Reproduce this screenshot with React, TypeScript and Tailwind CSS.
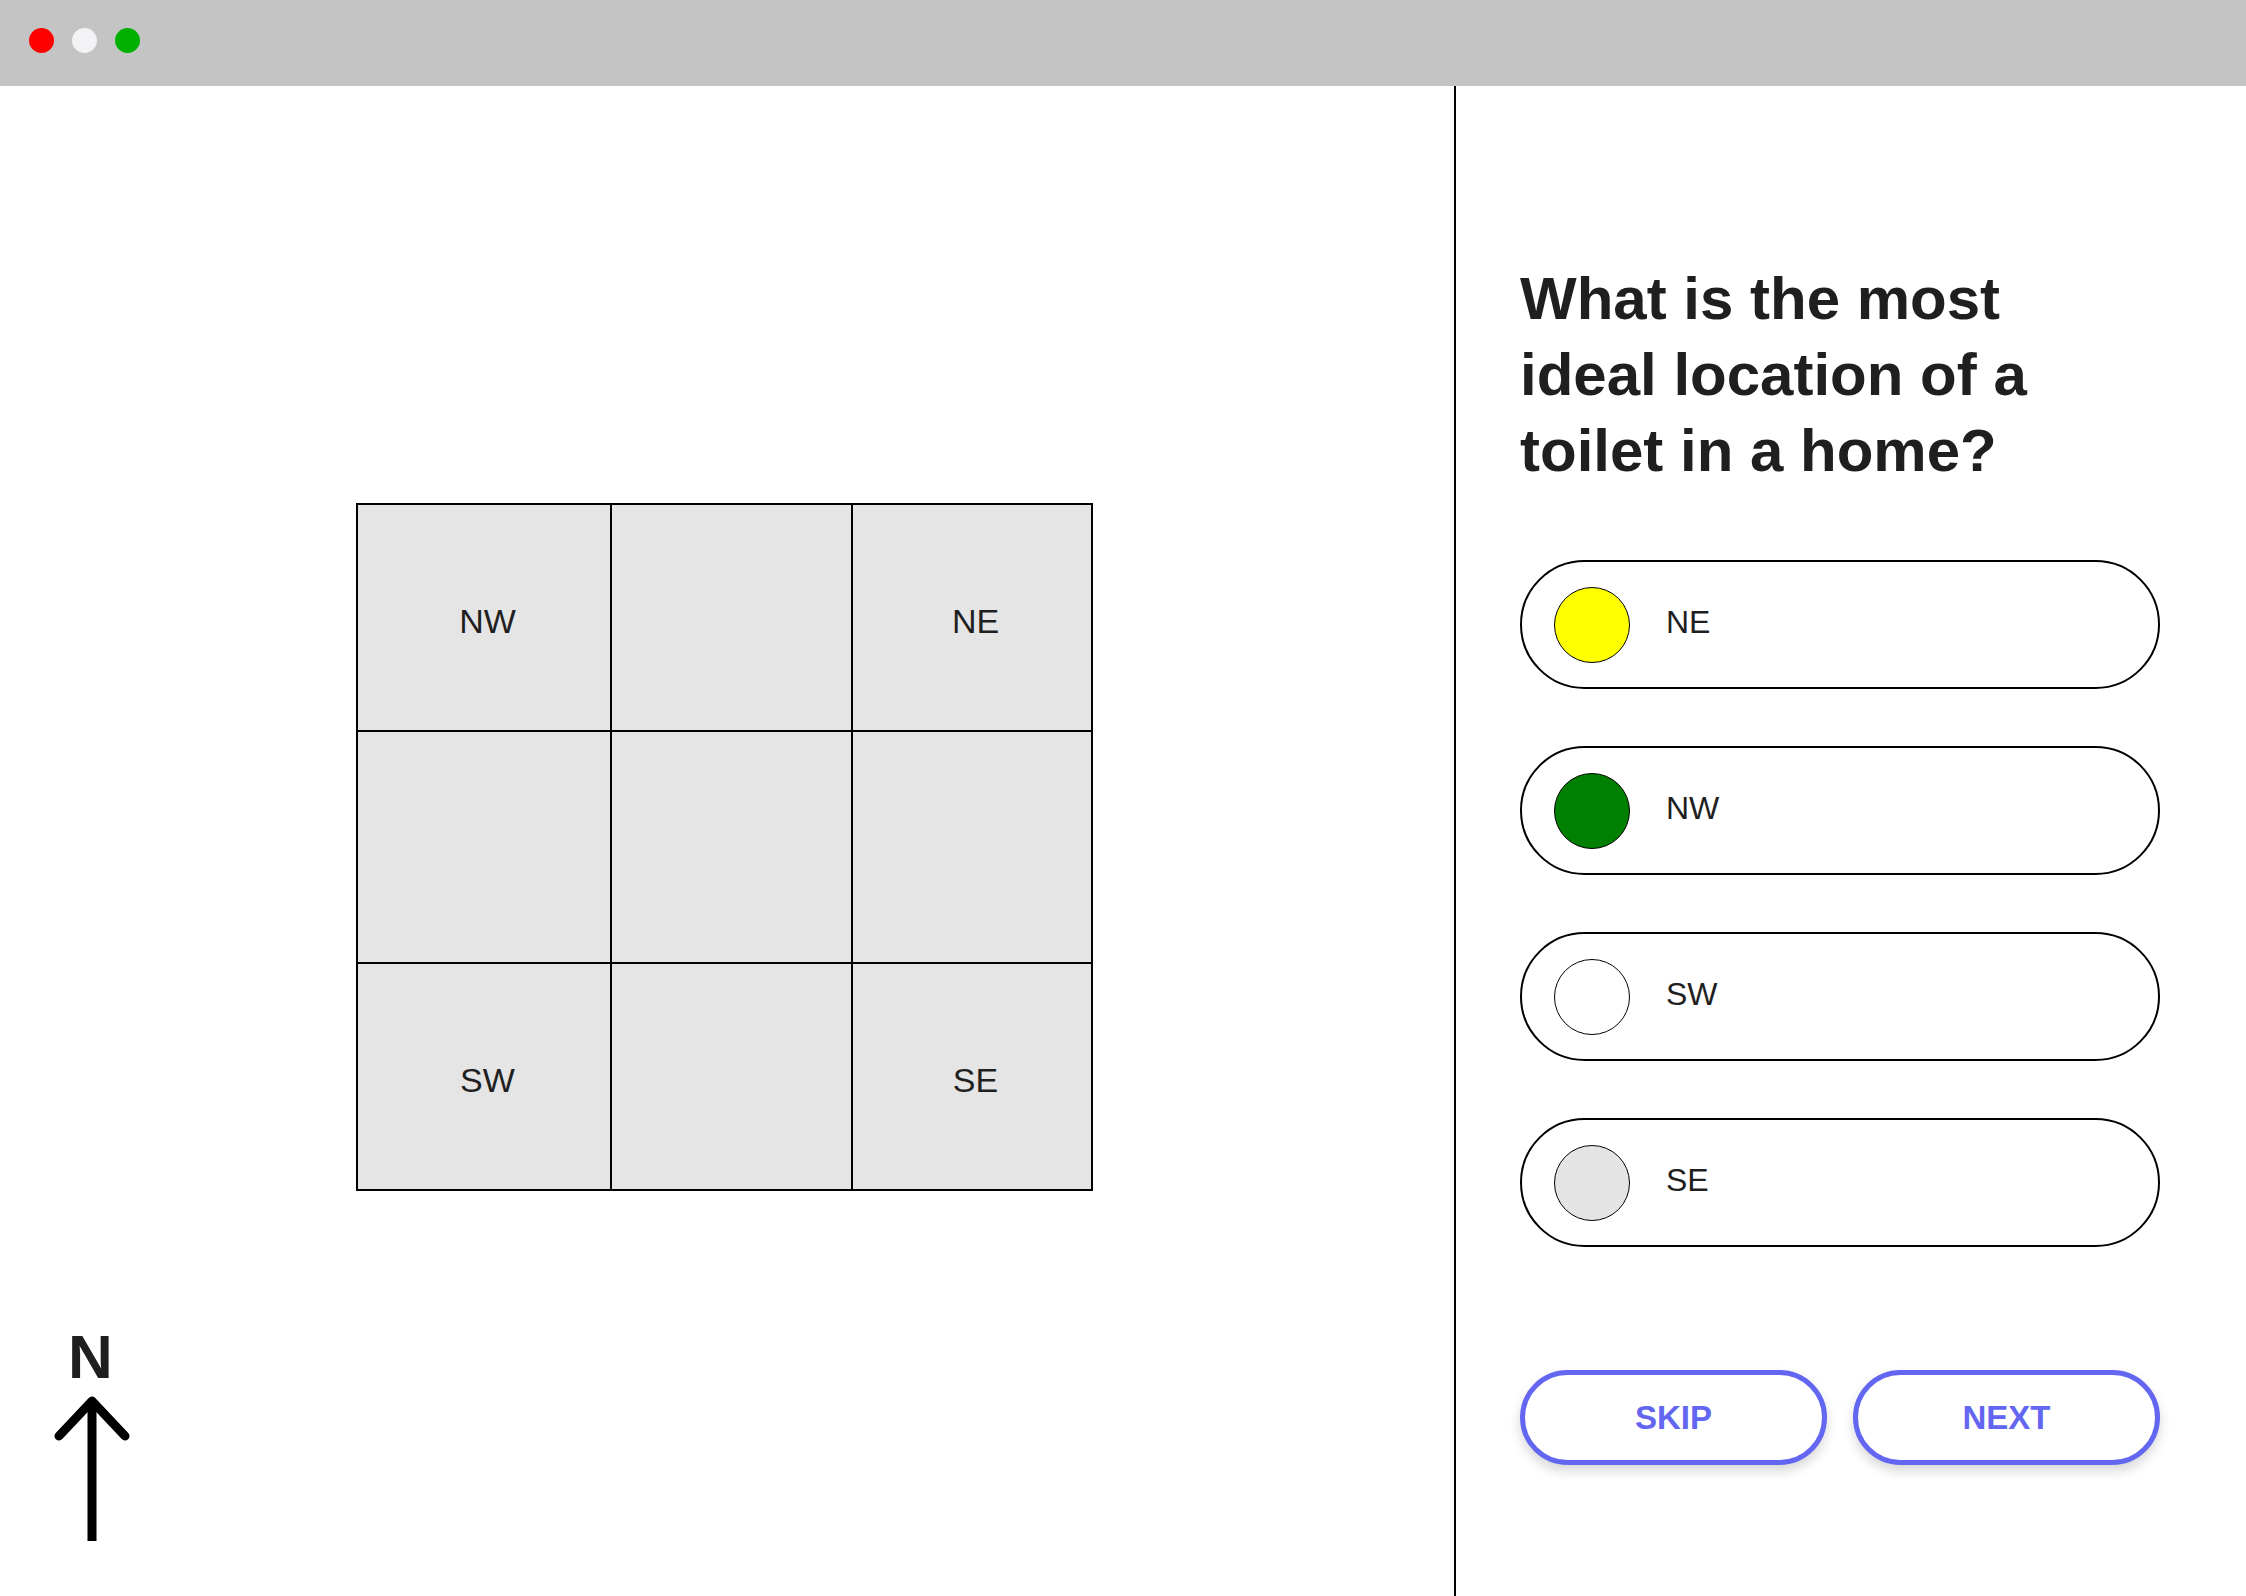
import React, { useState } from 'react';

type Option = { label: string; color: string };

const options: Option[] = [
  { label: 'NE', color: 'bg-[#ffff00]' },
  { label: 'NW', color: 'bg-[#008000]' },
  { label: 'SW', color: 'bg-white' },
  { label: 'SE', color: 'bg-[#e4e4e4]' },
];

const cells = ['NW', '', 'NE', '', '', '', 'SW', '', 'SE'];

const App: React.FC = () => {
  const [selected, setSelected] = useState<string | null>(null);

  return (
    <div
      className="w-[2246px] h-[1596px] flex flex-col bg-white text-[#1f1f1f] overflow-hidden"
      style={{ fontFamily: '"Liberation Sans", Arial, sans-serif' }}
    >
      {/* Window chrome */}
      <div className="h-[86px] shrink-0 bg-[#c4c4c4] flex items-start gap-[18px] pl-[29px] pt-[28px]">
        <span className="w-[25px] h-[25px] rounded-full bg-[#ff0000]" />
        <span className="w-[25px] h-[25px] rounded-full bg-[#f3f3f6]" />
        <span className="w-[25px] h-[25px] rounded-full bg-[#00b000]" />
      </div>

      <div className="flex flex-1 min-h-0">
        {/* Floor plan */}
        <div className="relative w-[1456px] shrink-0 border-r-2 border-black flex items-center justify-center">
          <div className="grid grid-cols-[252px_239px_238px] grid-rows-[225px_230px_225px] gap-[2px] p-[2px] bg-black mt-[11px] -ml-[6px]">
            {cells.map((c, i) => (
              <div key={i} className="bg-[#e5e5e5] flex items-center justify-center text-[34px] pt-[8px] pl-[8px]">
                {c}
              </div>
            ))}
          </div>

          {/* Compass */}
          <div className="absolute left-[47px] bottom-[55px] w-[90px] flex flex-col items-center">
            <span className="text-[62px] font-bold leading-[62px] -ml-[3px]">N</span>
            <svg width="82" height="150" viewBox="0 0 82 150" className="mt-[3px]">
              <line x1="41" y1="10" x2="41" y2="150" stroke="black" strokeWidth="9" />
              <polyline
                points="8,45 41,10 74,45"
                fill="none"
                stroke="black"
                strokeWidth="9"
                strokeLinecap="round"
                strokeLinejoin="round"
              />
            </svg>
          </div>
        </div>

        {/* Question */}
        <div className="flex-1 pl-[64px] pt-[175px] flex flex-col">
          <h1 className="text-[60px] font-bold leading-[76px] w-[640px]">
            What is the most
            <br />
            ideal location of a
            <br />
            toilet in a home?
          </h1>

          <div className="mt-[71px] flex flex-col gap-[57px] w-[640px]">
            {options.map((o) => (
              <button
                key={o.label}
                onClick={() => setSelected(o.label)}
                className={`h-[129px] rounded-full border-2 border-black flex items-center pl-[32px] gap-[36px] text-left ${selected === o.label ? 'bg-gray-50' : 'bg-white'}`}
              >
                <span className={`w-[76px] h-[76px] rounded-full border-[1.5px] border-black ${o.color}`} />
                <span className="text-[32px] pb-[6px]">{o.label}</span>
              </button>
            ))}
          </div>

          <div className="mt-[123px] grid grid-cols-2 gap-[26px] w-[640px]">
            <button className="h-[95px] rounded-full border-[5px] border-[#6366f1] bg-white text-[#6366f1] text-[33px] font-bold shadow-[0_6px_12px_rgba(0,0,0,0.16)]">
              SKIP
            </button>
            <button className="h-[95px] rounded-full border-[5px] border-[#6366f1] bg-white text-[#6366f1] text-[33px] font-bold shadow-[0_6px_12px_rgba(0,0,0,0.16)]">
              NEXT
            </button>
          </div>
        </div>
      </div>
    </div>
  );
};

export default App;
